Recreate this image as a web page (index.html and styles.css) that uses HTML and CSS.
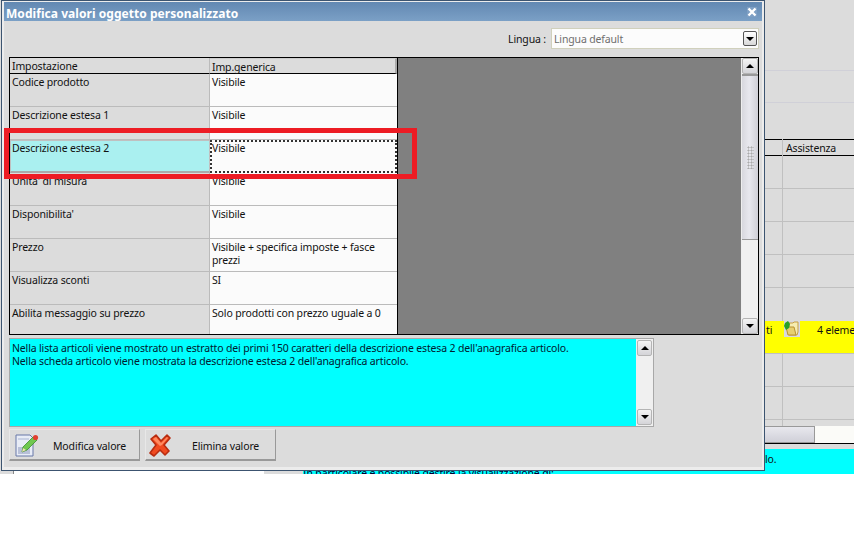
FILE: index.html
```html
<!DOCTYPE html>
<html lang="en">
<head>
    <meta charset="UTF-8">
    <title>Modifica valori oggetto personalizzato</title>
    <link rel="stylesheet" href="styles.css">
</head>
<body>
    <div class="screen">
        <!-- griglia della finestra dietro al dialogo -->
        <div class="back-grid">
            <div class="back-line" style="top:70px"></div>
            <div class="back-line" style="top:102px"></div>
            <div class="back-head">Assistenza</div>
            <div class="back-col"></div>
            <div class="back-row" style="top:188px"></div>
            <div class="back-row" style="top:221px"></div>
            <div class="back-row" style="top:254px"></div>
            <div class="back-row" style="top:287px"></div>
            <div class="back-yellow">
                <span class="back-ti">ti</span>
                <svg class="back-folder" width="16" height="16" viewBox="0 0 16 16">
                    <rect x="0" y="0" width="16" height="16" fill="#d8d8e0"/>
                    <path d="M5 2h4l1-1h4v10l-1 3H5z" fill="#f6ecb0" stroke="#c8a040"/>
                    <path d="M2 6h8l2 8H4z" fill="#e8d070" stroke="#b89030"/>
                    <path d="M1 2l3-2 2 3-1 4-3 2-2-4z" fill="#28a028"/>
                </svg>
                <span class="back-count">4 eleme</span>
            </div>
            <div class="back-row" style="top:386px"></div>
            <div class="back-row" style="top:419px"></div>
            <div class="back-scroll"><div class="back-thumb"></div></div>
            <div class="back-note"><span class="back-note-end">lo.</span><span class="back-note-text">In particolare è possibile gestire la visualizzazione di:</span></div>
            <div class="back-strip"></div>
        </div>

        <div class="dialog">
            <div class="title-bar">
                <span class="title">Modifica valori oggetto personalizzato</span>
                <svg class="close" width="10" height="10" viewBox="0 0 10 10">
                    <path d="M1.5 1.5l7 7M8.5 1.5l-7 7" stroke="#fff" stroke-width="2.4" fill="none"/>
                </svg>
            </div>
            <div class="body">
                <div class="lang-row">
                    <span class="lang-label">Lingua :</span>
                    <div class="combo">
                        <span>Lingua default</span>
                        <div class="combo-btn"><span class="arrow-down"></span></div>
                    </div>
                </div>

                <div class="table-wrap">
                    <div class="grid">
                        <div class="head">Impostazione</div>
                        <div class="head head-2">Imp.generica</div>

                        <div class="cell key">Codice prodotto</div>
                        <div class="cell val">Visibile</div>
                        <div class="cell key">Descrizione estesa 1</div>
                        <div class="cell val">Visibile</div>
                        <div class="cell key key-sel">Descrizione estesa 2</div>
                        <div class="cell val val-sel">Visibile</div>
                        <div class="cell key">Unita' di misura</div>
                        <div class="cell val">Visibile</div>
                        <div class="cell key">Disponibilita'</div>
                        <div class="cell val">Visibile</div>
                        <div class="cell key">Prezzo</div>
                        <div class="cell val">Visibile + specifica imposte + fasce prezzi</div>
                        <div class="cell key">Visualizza sconti</div>
                        <div class="cell val">SI</div>
                        <div class="cell key last">Abilita messaggio su prezzo</div>
                        <div class="cell val last">Solo prodotti con prezzo uguale a 0</div>
                    </div>
                    <div class="empty-area"></div>
                    <div class="scrollbar">
                        <div class="sb-btn"><span class="arrow-up"></span></div>
                        <div class="sb-thumb">
                            <div class="grip"></div>
                        </div>
                        <div class="sb-track"></div>
                        <div class="sb-btn"><span class="arrow-down"></span></div>
                    </div>
                </div>

                <div class="help-box">
                    <div class="help-text">
                        Nella lista articoli viene mostrato un estratto dei primi 150 caratteri della descrizione estesa 2 dell'anagrafica articolo.<br>
                        Nella scheda articolo viene mostrata la descrizione estesa 2 dell'anagrafica articolo.
                    </div>
                    <div class="help-scroll">
                        <div class="sb-btn"><span class="arrow-up"></span></div>
                        <div class="sb-track"></div>
                        <div class="sb-btn"><span class="arrow-down"></span></div>
                    </div>
                </div>

                <div class="actions">
                    <button class="action">
                        <svg class="action-icon" width="24" height="24" viewBox="0 0 24 24">
                            <path d="M1 2h14l3 3v18H1z" fill="#e8ecf6" stroke="#6878a8"/>
                            <rect x="3" y="5" width="11" height="2" fill="#c8d0e4"/>
                            <rect x="3" y="14" width="12" height="7" fill="#b8c0d8"/>
                            <path d="M7 19l1-5L18 4l4 3-10 10z" fill="#70c850" stroke="#3c8c30" stroke-width=".8"/>
                            <path d="M7 19l1-4 3 2z" fill="#f0e0b0"/>
                            <circle cx="20.500" cy="4.500" r="2.600" fill="#e04030"/>
                        </svg>
                        <span class="action-label">Modifica valore</span>
                    </button>
                    <button class="action">
                        <svg class="action-icon icon-x" width="24" height="24" viewBox="0 0 24 24">
                            <path d="M3 6l5-4 5 6 6-6 3 3-6 7 5 6-4 4-5-5-6 6-4-3 6-8z" fill="#f04a20" stroke="#b82c10" stroke-width="1.600" stroke-linejoin="round"/>
                            <path d="M5 6l3-2 5 6 6-6 1 1-6 7-2 1z" fill="#ff8a60"/>
                        </svg>
                        <span class="action-label label-x">Elimina valore</span>
                    </button>
                </div>
            </div>
        </div>

        <div class="red-box"></div>
    </div>
</body>
</html>
```

FILE: styles.css
```css
body {
    margin: 0;
    background-color: #fff;
    font-family: 'Noto Sans', sans-serif;
    font-size: 10.5px;
    letter-spacing: -0.15px;
    color: #111;
}
.screen {
    position: relative;
    width: 854px;
    height: 474px;
    overflow: hidden;
    background-color: #dcdcdc;
}

/* finestra dietro */
.back-grid {
    position: absolute;
    inset: 0;
}
.back-line {
    position: absolute;
    left: 765px;
    right: 0;
    height: 1px;
    background-color: #d0d0d8;
}
.back-head {
    position: absolute;
    left: 765px;
    right: 0;
    top: 139px;
    height: 15px;
    border-top: 1px solid #000;
    border-bottom: 1px solid #000;
    padding-left: 21px;
    line-height: 16px;
}
.back-col {
    position: absolute;
    left: 782px;
    top: 139px;
    width: 1px;
    height: 287px;
    background-color: #c0c0c0;
}
.back-row {
    position: absolute;
    left: 765px;
    right: 0;
    height: 1px;
    background-color: #c0c0c0;
}
.back-yellow {
    position: absolute;
    left: 765px;
    right: 0;
    top: 321px;
    height: 32px;
    background-color: #ffff00;
    border-bottom: 1px solid #c0c0c0;
    overflow: hidden;
}
.back-ti {
    position: absolute;
    left: 1px;
    top: 2px;
}
.back-folder {
    position: absolute;
    left: 19px;
    top: 0;
}
.back-count {
    position: absolute;
    left: 52px;
    top: 2px;
    white-space: nowrap;
}
.back-scroll {
    position: absolute;
    left: 765px;
    right: 0;
    top: 426px;
    height: 17px;
    background-color: #fbfbf8;
    border-bottom: 1px solid #000;
}
.back-thumb {
    width: 49px;
    height: 15px;
    background: linear-gradient(#e8e8ee, #d0d0d8);
    border: 1px solid #999;
    border-left: none;
}
.back-note {
    position: absolute;
    left: 303px;
    right: 0;
    top: 449px;
    height: 25px;
    background-color: #00ffff;
    overflow: hidden;
}
.back-note-end {
    position: absolute;
    left: 462px;
    top: 3px;
}
.back-note-text {
    position: absolute;
    left: 0;
    top: 17px;
    color: #003;
    white-space: nowrap;
}
.back-strip {
    position: absolute;
    left: 13px;
    top: 471px;
    width: 250px;
    height: 3px;
    background-color: #fff;
    border-left: 1px solid #888;
}

/* dialogo */
.dialog {
    position: absolute;
    left: 1px;
    top: 0;
    width: 764px;
    height: 471px;
    display: flex;
    flex-direction: column;
    border: 1px solid #3c5470;
    background-color: #ececec;
    padding: 1px 2px 3px 2px;
    box-sizing: border-box;
}
.title-bar {
    display: flex;
    align-items: center;
    justify-content: space-between;
    height: 19px;
    flex-shrink: 0;
    padding: 0 5px 0 2px;
    background: linear-gradient(#6288b2, #7ba0c6);
}
.title {
    color: #fff;
    font-weight: bold;
    font-size: 12px;
    letter-spacing: 0.05px;
    padding-top: 3px;
}
.close {
    background-color: #7e9fc4;
}
.body {
    flex: 1;
    display: flex;
    flex-direction: column;
    background-color: #dcdcdc;
    padding: 0 3px 0 5px;
}
.lang-row {
    display: flex;
    justify-content: flex-end;
    align-items: center;
    gap: 5px;
    height: 21px;
    margin-top: 7px;
    margin-bottom: 8px;
}
.combo {
    width: 208px;
    height: 21px;
    box-sizing: border-box;
    display: flex;
    align-items: center;
    justify-content: space-between;
    padding: 0 1px 0 2px;
    background-color: #fcfcfc;
    border: 1px solid #d0d0bc;
    color: #6e6e6e;
}
.combo-btn {
    width: 14px;
    height: 15px;
    box-sizing: border-box;
    display: flex;
    align-items: center;
    justify-content: center;
    background: linear-gradient(#fff, #d8d8d8);
    border: 1px solid #555;
    border-radius: 2px;
}
.arrow-down, .arrow-up {
    width: 0;
    height: 0;
    border-left: 4px solid transparent;
    border-right: 4px solid transparent;
}
.arrow-down {
    border-top: 4px solid #000;
}
.arrow-up {
    border-bottom: 4px solid #000;
}

/* griglia */
.table-wrap {
    display: flex;
    height: 278px;
    box-sizing: border-box;
    width: 750px;
    border: 1px solid #000;
}
.grid {
    width: 387px;
    flex-shrink: 0;
    display: grid;
    grid-template-columns: 200px 187px;
    grid-template-rows: 16px repeat(7, 33px) 29px;
    border-right: 1px solid #000;
    overflow: hidden;
}
.head {
    background-color: #dcdcdc;
    border-bottom: 1px solid #000;
    border-right: 1px solid #bbb;
    padding-left: 2px;
    line-height: 16px;
}
.head-2 {
    border-right: 2px solid #aaa;
    border-top: 1px solid #ccc;
}
.cell {
    padding: 2px 2px 0;
    line-height: 13px;
    border-bottom: 1px solid #bbb;
    border-right: 1px solid #bbb;
}
.key {
    background-color: #dcdcdc;
}
.val {
    background-color: #fbfbfb;
    border-right: none;
}
.last {
    border-bottom: none;
}
.key-sel {
    background-color: #aaf0f0;
    border: 1px solid #c0c0c0;
    border-bottom: 2px solid #aaa;
    padding: 1px 1px 0;
}
.val-sel {
    border: 2px dotted #333;
    padding: 0;
}
.empty-area {
    flex: 1;
    background-color: #808080;
}
.scrollbar {
    width: 16px;
    flex-shrink: 0;
    display: flex;
    flex-direction: column;
    background-color: #f0f0f0;
    border-left: 1px solid #eee;
}
.sb-btn {
    height: 16px;
    flex-shrink: 0;
    box-sizing: border-box;
    display: flex;
    align-items: center;
    justify-content: center;
    background: linear-gradient(#f4f4f4, #d4d4d8);
    border: 1px solid #b4b4b4;
    border-radius: 2px;
}
.sb-thumb {
    height: 166px;
    flex-shrink: 0;
    box-sizing: border-box;
    display: flex;
    align-items: center;
    justify-content: center;
    background: linear-gradient(90deg, #d8d8de, #e8e8ee 45%, #cfcfd6);
    border-top: 2px solid #999;
    border-bottom: 1px solid #999;
}
.grip {
    width: 7px;
    height: 23px;
    background-image: radial-gradient(#aaa 45%, transparent 50%);
    background-size: 3px 3px;
}
.sb-track {
    flex: 1;
    background-color: #f0f0f0;
}

/* descrizione */
.help-box {
    display: flex;
    width: 645px;
    height: 89px;
    box-sizing: border-box;
    margin-top: 3px;
    background-color: #00ffff;
    border: 1px solid #a8a8a8;
}
.help-text {
    flex: 1;
    padding: 3px 2px;
    line-height: 13px;
    color: #002030;
}
.help-scroll {
    width: 17px;
    display: flex;
    flex-direction: column;
    padding: 1px;
    box-sizing: border-box;
    background-color: #f0f0f0;
}
.actions {
    display: flex;
    gap: 5px;
    margin-top: 2px;
}
.action {
    width: 131px;
    height: 32px;
    padding: 0;
    display: flex;
    align-items: center;
    background-color: #dcdcdc;
    border: 1px solid #e8e8e8;
    border-right: 1px solid #999;
    border-bottom: 2px solid #999;
    font-family: inherit;
    font-size: inherit;
    letter-spacing: inherit;
    color: #111;
}
.action-icon {
    margin-left: 5px;
    flex-shrink: 0;
}
.icon-x {
    margin-left: 2px;
}
.action-label {
    margin-left: 14px;
    padding-top: 2px;
}
.label-x {
    margin-left: 20px;
}

/* evidenziazione rossa */
.red-box {
    position: absolute;
    left: 4px;
    top: 128px;
    width: 403px;
    height: 41px;
    border: 5px solid #ed1c24;
}
```
